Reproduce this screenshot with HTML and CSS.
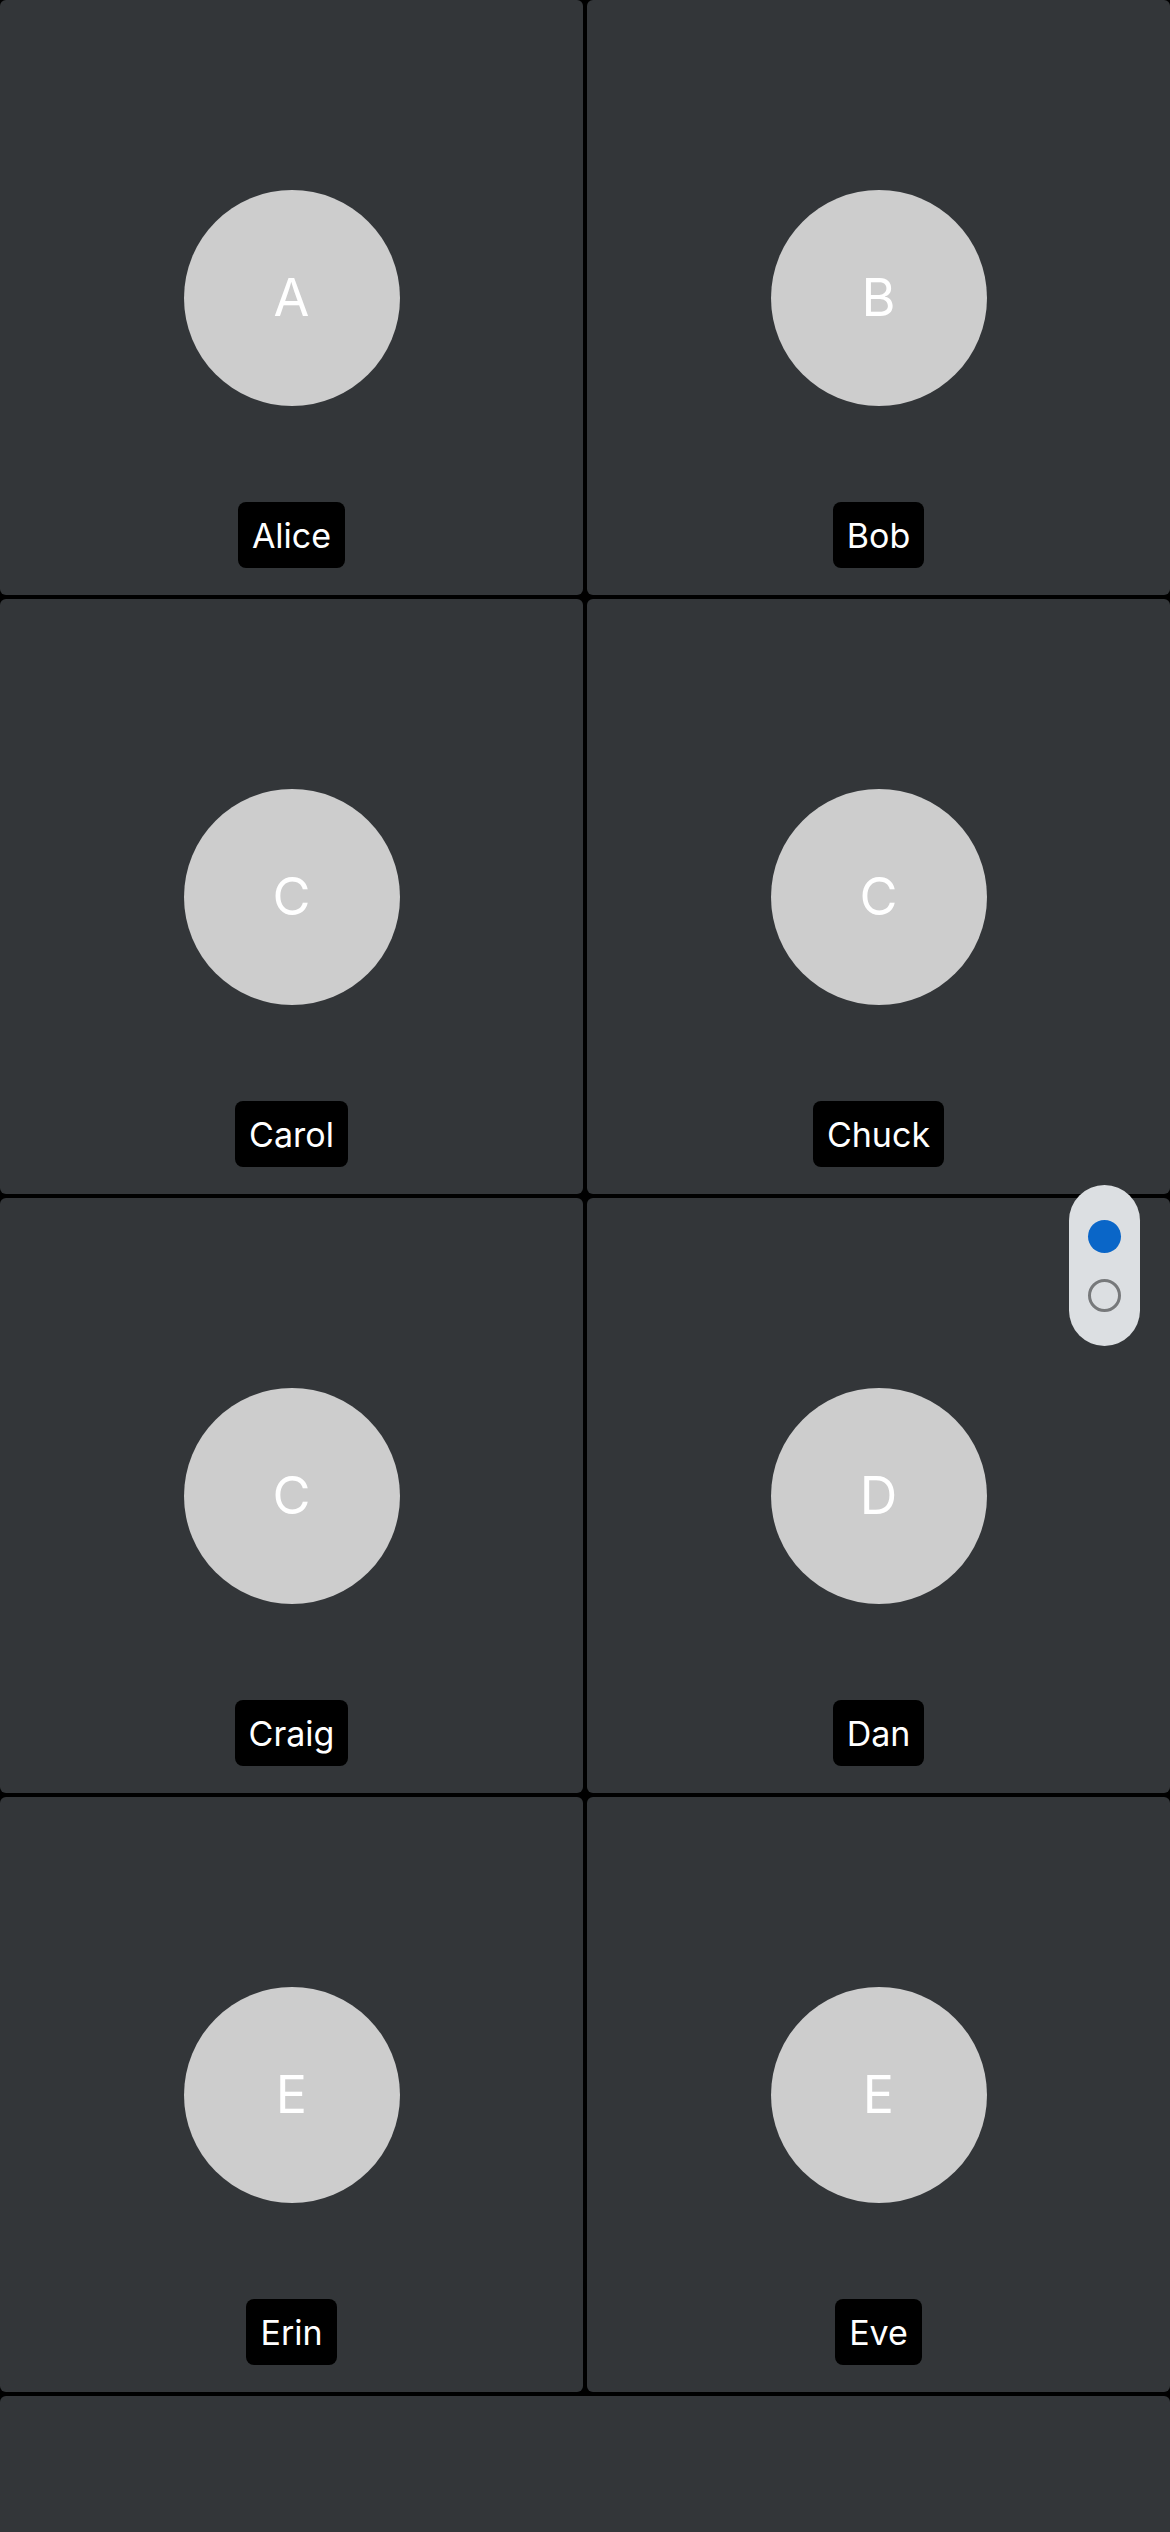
FILE: index.html
```html
<!DOCTYPE html>
<html lang="en">
<head>
<meta charset="utf-8">
<title>Participants</title>
<link rel="stylesheet" href="styles.css">
</head>
<body>
<div class="stage">
  <div class="grid">
    <div class="tile"><div class="avatar">A</div><div class="name">Alice</div></div>
    <div class="tile"><div class="avatar">B</div><div class="name">Bob</div></div>
    <div class="tile"><div class="avatar">C</div><div class="name">Carol</div></div>
    <div class="tile"><div class="avatar">C</div><div class="name">Chuck</div></div>
    <div class="tile"><div class="avatar">C</div><div class="name">Craig</div></div>
    <div class="tile"><div class="avatar">D</div><div class="name">Dan</div></div>
    <div class="tile"><div class="avatar">E</div><div class="name">Erin</div></div>
    <div class="tile"><div class="avatar">E</div><div class="name">Eve</div></div>
    <div class="tile tile-wide"></div>
  </div>
  <div class="pager">
    <span class="dot dot-active"></span>
    <span class="dot"></span>
  </div>
</div>
</body>
</html>
```

FILE: styles.css
```css
html, body {
  margin: 0;
  padding: 0;
  background: #000;
}
body {
  font-family: Inter, Roboto, "Liberation Sans", sans-serif;
  overflow: hidden;
}
.stage {
  position: relative;
  width: 1170px;
}
.grid {
  display: grid;
  grid-template-columns: 583px 583px;
  grid-auto-rows: 595px;
  gap: 4px;
}
.tile {
  background: #333639;
  border-radius: 6px;
  display: grid;
  grid-template-rows: 1fr auto 1fr;
  justify-items: center;
}
.tile-wide {
  grid-column: 1 / -1;
}
.avatar {
  grid-row: 2;
  width: 216px;
  height: 216px;
  border-radius: 50%;
  background: #cdcdcd;
  color: #fff;
  font-size: 52px;
  font-weight: 400;
  display: flex;
  align-items: center;
  justify-content: center;
  line-height: 1;
}
.name {
  grid-row: 3;
  align-self: end;
  margin-bottom: 27px;
  height: 66px;
  padding: 0 14px;
  background: #000;
  color: #fff;
  border-radius: 8px;
  font-size: 34px;
  display: flex;
  align-items: center;
}
.pager {
  position: absolute;
  left: 1069px;
  top: 1185px;
  width: 71px;
  height: 161px;
  border-radius: 36px;
  background: #dcdfe2;
  display: flex;
  flex-direction: column;
  align-items: center;
  justify-content: center;
  gap: 26px;
}
.dot {
  width: 33px;
  height: 33px;
  border-radius: 50%;
  box-sizing: border-box;
  border: 3px solid #77797b;
}
.dot-active {
  background: #0a66c8;
  border: none;
}
```
